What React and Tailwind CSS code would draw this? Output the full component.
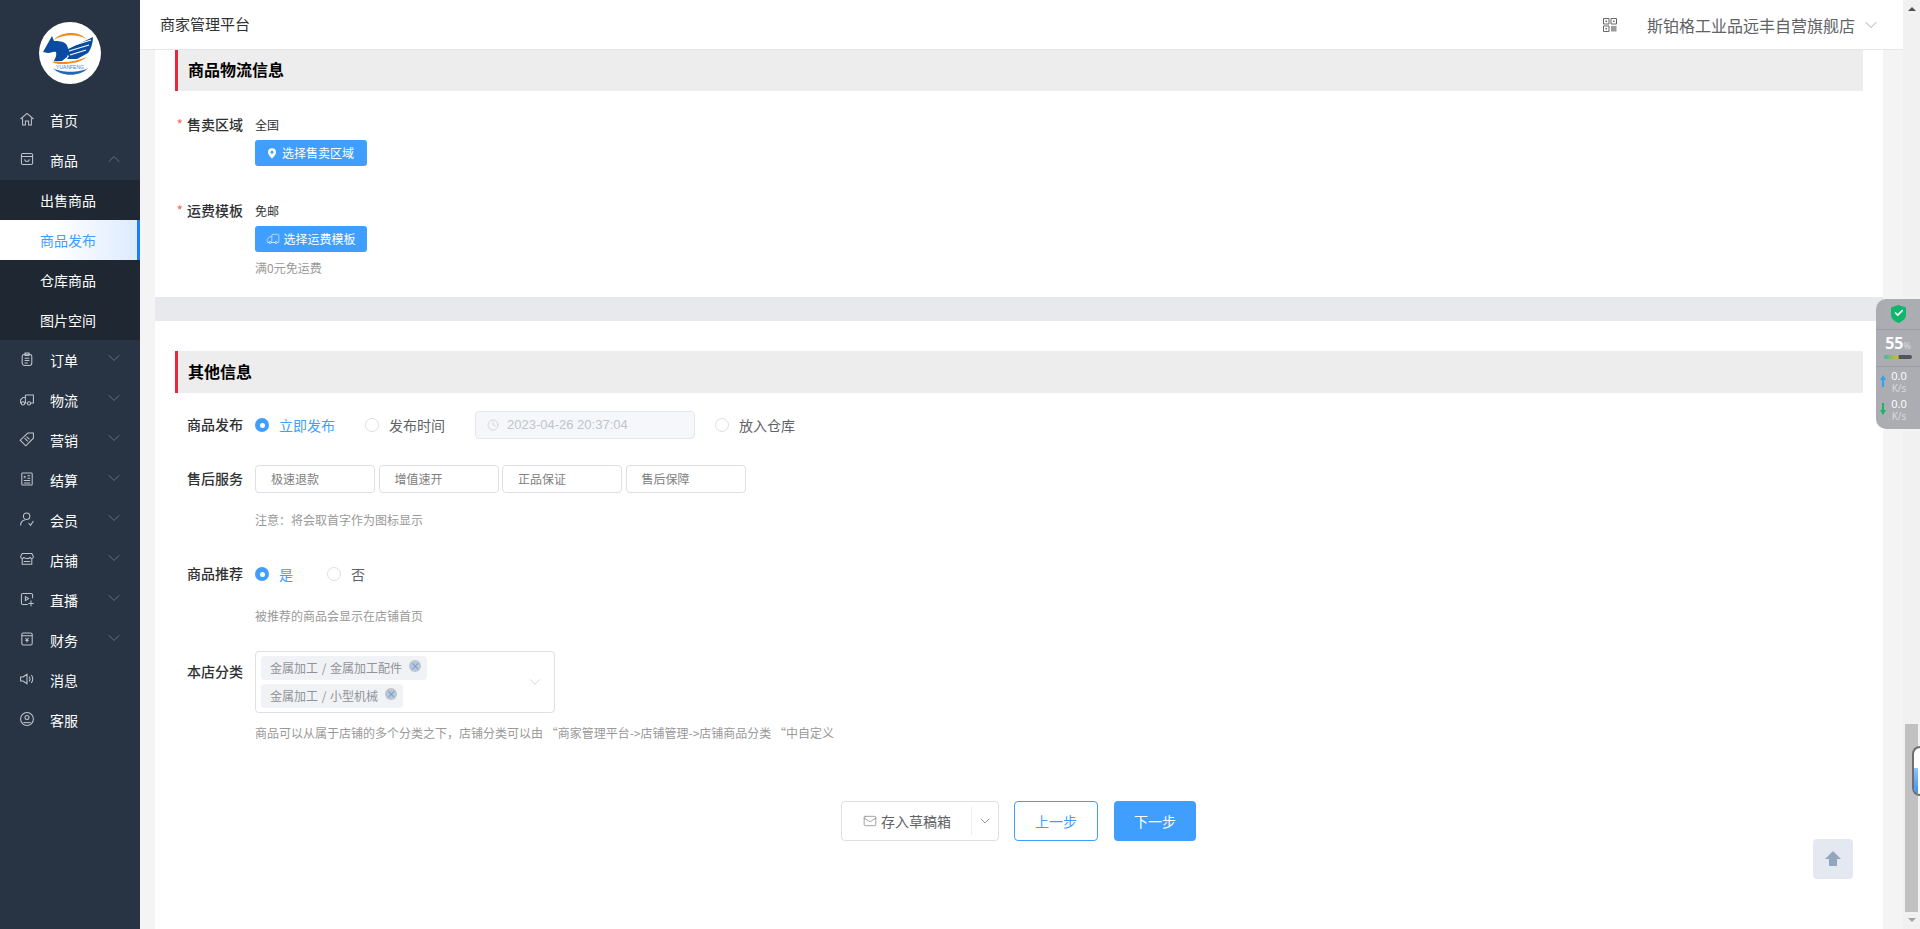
import { Clock, Truck, Mail, ChevronDown, ChevronUp, Check } from 'lucide-react'

const FONT = { fontFamily: '"Noto Sans CJK SC", "Liberation Sans", sans-serif' }

const ICONOS = {
  home: <><path d="M2 10 10 3l8 7" /><path d="M4.500 9v8.500h3.500v-5h4v5h3.500V9" /></>,
  caja: <><rect x="3" y="3" width="14" height="14" rx="2" /><path d="M3 7h14M7 10.500c.5 3.500 5.500 3.500 6 0" /></>,
  pedido: <><rect x="4" y="4" width="12" height="14" rx="3" /><path d="M7.500 2.500h5v3h-5zM7 9h6M7 12h6M7 15h4" /></>,
  camion: <><path d="M8 5h10v10h-3M8 5v10h1.500M8 8H5l-3 3v4h1" /><circle cx="5" cy="15.500" r="2" /><circle cx="12.500" cy="15.500" r="2" /></>,
  etiqueta: <><path d="m11 2.500 7 0 0 6.500-9.500 9.500-7-7z" /><path d="m7 9 4 4M9.500 7l3.500 3.500" /></>,
  factura: <><rect x="3.500" y="2.500" width="13" height="15" rx="1" /><path d="M6 6l2 1.500L6 9M10.500 6H14M10.500 9H14M6 12h8M6 15h8" /></>,
  usuario: <><circle cx="9.500" cy="6.500" r="4" /><path d="M2 18c0-4 3-6.500 6-7M12 15l2.500 3L18 12.500" /></>,
  tienda: <><path d="M4 3h12l2 4c0 3-4 3-4 .5 0 2.500-8 2.500-8 0C6 10 2 10 2 7z" /><path d="M4 10v6.500h12V10M6 13h8" /></>,
  directo: <><path d="M17 9V5a2 2 0 0 0-2-2H5a2 2 0 0 0-2 2v10a2 2 0 0 0 2 2h6" /><path d="m8 7 4 2.500L8 12zM15 12v7M11.500 15.500h7" /></>,
  finanzas: <><rect x="3.500" y="2.500" width="13" height="15" rx="2" /><path d="M3.500 6h13M8 9l2 2 2-2M10 11v3M8 12h4" /></>,
  altavoz: <><path d="M2 7.500h3L10 4v12l-5-3.500H2z" /><path d="M13 7c1 2 1 4 0 6M15.500 5c2 3 2 7 0 10" /></>,
  soporte: <><circle cx="10" cy="10" r="8" /><circle cx="10" cy="8" r="2.500" /><path d="M5.500 14.500h9" /></>,
}

const MENU_ARRIBA = [
  { nombre: '首页', icono: 'home' },
  { nombre: '商品', icono: 'caja', abierto: true },
]
const SUBMENU = ['出售商品', '商品发布', '仓库商品', '图片空间']
const MENU_ABAJO = [
  { nombre: '订单', icono: 'pedido', flecha: true },
  { nombre: '物流', icono: 'camion', flecha: true },
  { nombre: '营销', icono: 'etiqueta', flecha: true },
  { nombre: '结算', icono: 'factura', flecha: true },
  { nombre: '会员', icono: 'usuario', flecha: true },
  { nombre: '店铺', icono: 'tienda', flecha: true },
  { nombre: '直播', icono: 'directo', flecha: true },
  { nombre: '财务', icono: 'finanzas', flecha: true },
  { nombre: '消息', icono: 'altavoz' },
  { nombre: '客服', icono: 'soporte' },
]

function Logo() {
  return (
    <svg width="62" height="62" viewBox="0 0 62 62">
      <circle cx="31" cy="31" r="31" fill="#fff" />
      <path d="M15 18C22 9 40 9 47 17 39 12 24 12 15 18z" fill="#ee8b1e" />
      <path d="M4 30 13 14l2 5c4 0 9 0 12 3 3 4 3 9 1 13l-5 4-8 0c1-3 3-5 2-9-3-1-5 1-8 1-2 0-3-1-5-1z" fill="#0a4ba3" />
      <path d="M27 28 54 15c0 6-2 12-5 16l-11 6-10 0 2-3-3-2z" fill="#0a4ba3" />
      <path d="M29 25 52 18M30 29 50 23M31 33 47 28" stroke="#fff" strokeWidth="1.200" fill="none" />
      <path d="M13 40c4-1 8 0 11 0 8 0 16-2 24-5-6 5-16 7-24 7-4 0-7 0-11-2z" fill="#ee8b1e" />
      <path d="M14 46c7 9 28 9 35 0-8 5-27 5-35 0z" fill="#1f66c1" />
      <text x="31" y="47" textAnchor="middle" fontSize="5" fill="#3f7fd0" fontFamily="Liberation Sans, sans-serif">YUANFENG</text>
    </svg>
  )
}

function ItemMenu({ nombre, icono, flecha, abierto }) {
  return (
    <div className="flex h-10 items-center pl-[19px] text-sm text-white">
      <svg width="16" height="16" viewBox="0 0 20 20" fill="none" stroke="#bfc5cc" strokeWidth="1.300" className="mr-[15px] -translate-y-px">
        {ICONOS[icono]}
      </svg>
      <span className="w-[54px]">{nombre}</span>
      {flecha && <ChevronDown size={20} strokeWidth={0.9} className="-translate-y-[2px] text-[#7d8691]" />}
      {abierto && <ChevronUp size={20} strokeWidth={0.9} className="-translate-y-px text-[#7d8691]" />}
    </div>
  )
}

function Sidebar() {
  return (
    <aside className="flex w-[140px] shrink-0 flex-col bg-[#283443]">
      <div className="flex h-[100px] justify-center pt-[22px]">
        <Logo />
      </div>
      {MENU_ARRIBA.map((m) => <ItemMenu key={m.nombre} {...m} />)}
      <div className="bg-[#1e2732]">
        {SUBMENU.map((s) =>
          s === '商品发布' ? (
            <div key={s} className="flex h-10 items-center border-r-[3px] border-[#1a7ffb] bg-gradient-to-r from-white from-40% to-[#dcebff] pl-[40px] text-sm text-[#409eff]">{s}</div>
          ) : (
            <div key={s} className="flex h-10 items-center pl-[40px] text-sm text-white">{s}</div>
          ),
        )}
      </div>
      {MENU_ABAJO.map((m) => <ItemMenu key={m.nombre} {...m} />)}
    </aside>
  )
}

function Cabecera() {
  return (
    <header className="flex h-[50px] shrink-0 items-center border-b border-[#e6e6e6] bg-white pl-[20px] pr-[22px]">
      <span className="text-[15px] text-[#303133]">商家管理平台</span>
      <svg width="14" height="14" viewBox="0 0 14 14" className="ml-auto mr-[30px] text-[#666]" fill="none" stroke="currentColor">
        <path d="M.5.500h5.500v5.500H.5zM8 .5h5.500v5.500H8zM.5 8h5.500v5.500H.5z" />
        <path d="M2.500 2.500h1.500v1.500H2.500zM10 2.500h1.500v1.500H10zM2.500 10h1.500v1.500H2.500z" fill="currentColor" stroke="none" />
        <path d="M8 8h5.500v5.500H8z" fill="currentColor" stroke="none" opacity=".65" />
      </svg>
      <span className="text-base text-[#606266]">斯铂格工业品远丰自营旗舰店</span>
      <ChevronDown size={20} strokeWidth={0.9} className="ml-[6px] text-[#8c8c8c]" />
    </header>
  )
}

function Titulo({ children, alto = 'h-[42px] pb-[2px]' }) {
  return (
    <h2 className={`flex ${alto} items-center border-l-[3px] border-[#e8293c] bg-[#ededed] pl-[10px] text-base font-bold text-black`}>
      {children}
    </h2>
  )
}

function Etiqueta({ children, req, className = '' }) {
  return (
    <div className={`mr-[12px] w-[68px] shrink-0 -translate-y-px text-right text-sm font-medium leading-5 text-[#303133] ${className}`}>
      {req && <span className="mr-[4px] font-normal text-[#f56c6c]">*</span>}
      {children}
    </div>
  )
}

function Radio({ activo, children, className = '' }) {
  return (
    <span className={`flex items-center text-sm leading-5 ${activo ? 'text-[#409eff]' : 'text-[#606266]'} ${className}`}>
      {activo ? (
        <span className="mr-[10px] flex size-[14px] items-center justify-center rounded-full bg-[#409eff]">
          <span className="size-[5px] rounded-full bg-white" />
        </span>
      ) : (
        <span className="mr-[10px] size-[14px] rounded-full border border-[#dcdfe6] bg-white" />
      )}
      {children}
    </span>
  )
}

function BotonAzul({ icono, children }) {
  return (
    <div className="flex h-[26px] w-[112px] items-center justify-center rounded-[3px] bg-[#409eff] text-xs text-white">
      {icono}
      {children}
    </div>
  )
}

function Chip({ children }) {
  return (
    <div className="flex h-6 w-fit items-center rounded-[4px] bg-[#f0f2f5] pl-[9px] pr-[6px] text-xs text-[#909399] [word-spacing:1px]">
      {children}
      <span className="relative -top-[2px] ml-[7px] flex size-[12px] items-center justify-center rounded-full bg-[#c0c4cc] text-[10px] leading-none text-[#409eff]">×</span>
    </div>
  )
}

function Formulario() {
  return (
    <div className="h-full bg-white px-[20px]">
      <Titulo alto="h-[41px] pb-[3px]">商品物流信息</Titulo>

      <div className="mt-[24px] flex">
        <Etiqueta req>售卖区域</Etiqueta>
        <div>
          <p className="text-xs leading-5 text-[#303133]">全国</p>
          <div className="mt-[5px]">
            <BotonAzul
              icono={
                <svg width="8" height="11" viewBox="0 0 10 13" className="mr-[6px]">
                  <path d="M5 0a5 5 0 0 1 5 5c0 3-3 6-5 8-2-2-5-5-5-8a5 5 0 0 1 5-5z" fill="white" />
                  <circle cx="5" cy="5" r="1.800" fill="#409eff" />
                </svg>
              }
            >
              选择售卖区域
            </BotonAzul>
          </div>
        </div>
      </div>

      <div className="mt-[35px] flex">
        <Etiqueta req>运费模板</Etiqueta>
        <div>
          <p className="text-xs leading-5 text-[#303133]">免邮</p>
          <div className="mt-[5px]">
            <BotonAzul icono={<Truck size={14} strokeWidth={1} className="mr-[3px] -scale-x-100" />}>选择运费模板</BotonAzul>
          </div>
          <p className="mt-[6px] text-xs leading-5 text-[#999]">满0元免运费</p>
        </div>
      </div>

      <div className="-mx-[20px] mb-[30px] mt-[19px] h-[24px] bg-[#e8e9ed]" />

      <Titulo>其他信息</Titulo>

      <div className="mt-[18px] flex items-center">
        <Etiqueta>商品发布</Etiqueta>
        <Radio activo className="mr-[30px]">立即发布</Radio>
        <Radio className="mr-[30px]">发布时间</Radio>
        <div className="mr-[20px] flex h-[28px] w-[220px] items-center rounded-[4px] border border-[#e4e7ed] bg-[#f5f7fa] pl-[11px] text-[13px] text-[#c0c4cc]" style={{ fontFamily: '"Liberation Sans", sans-serif' }}>
          <Clock size={12} strokeWidth={1.300} className="mr-[8px]" />
          2023-04-26 20:37:04
        </div>
        <Radio>放入仓库</Radio>
      </div>

      <div className="mt-[26px] flex items-center">
        <Etiqueta>售后服务</Etiqueta>
        <div className="flex gap-[3.5px]">
          {['极速退款', '增值速开', '正品保证', '售后保障'].map((t) => (
            <div key={t} className="flex h-[28px] w-[120px] items-center rounded-[4px] border border-[#dcdfe6] pl-[15px] text-xs text-[#808080]">{t}</div>
          ))}
        </div>
      </div>
      <p className="ml-[80px] mt-[17px] text-xs leading-5 text-[#999]">注意：将会取首字作为图标显示</p>

      <div className="mt-[34px] flex items-center">
        <Etiqueta>商品推荐</Etiqueta>
        <Radio activo className="mr-[34px]">是</Radio>
        <Radio>否</Radio>
      </div>
      <p className="ml-[80px] mt-[22px] text-xs leading-5 text-[#999]">被推荐的商品会显示在店铺首页</p>

      <div className="mt-[25px] flex items-start">
        <Etiqueta className="mt-[11px]">本店分类</Etiqueta>
        <div className="flex h-[62px] w-[300px] items-center rounded-[4px] border border-[#dcdfe6] pl-[5px] pr-[10px]">
          <div className="flex flex-1 flex-col gap-[4px]">
            <Chip>金属加工 / 金属加工配件</Chip>
            <Chip>金属加工 / 小型机械</Chip>
          </div>
          <ChevronDown size={18} strokeWidth={0.9} className="text-[#c0c4cc]" />
        </div>
      </div>
      <p className="ml-[80px] mt-[10px] text-xs leading-5 text-[#999]">商品可以从属于店铺的多个分类之下，店铺分类可以由 “商家管理平台-&gt;店铺管理-&gt;店铺商品分类 “中自定义</p>

      <div className="mt-[58px] flex h-[40px] justify-center pr-[1px]">
        <div className="flex w-[158px] items-center rounded-[4px] border border-[#dcdfe6] text-sm text-[#606266]">
          <Mail size={14} strokeWidth={1} className="ml-[21px] mr-[4px]" />
          存入草稿箱
          <span className="ml-[20px] h-[28px] w-px bg-[#ebeef5]" />
          <ChevronDown size={16} strokeWidth={1} className="ml-[5px] text-[#606266]" />
        </div>
        <div className="ml-[15px] flex w-[84px] items-center justify-center rounded-[4px] border border-[#409eff] text-sm text-[#409eff]">上一步</div>
        <div className="ml-[16px] flex w-[82px] items-center justify-center rounded-[4px] bg-[#409eff] text-sm text-white">下一步</div>
      </div>
    </div>
  )
}

function BarraScroll() {
  return (
    <div className="flex w-[17px] shrink-0 flex-col items-center bg-[#f1f1f1]">
      <div className="mt-[7px] size-0 border-x-[4px] border-b-[4px] border-x-transparent border-b-[#505050]" />
      <div className="mt-[713px] h-[188px] w-[13px] bg-[#c1c1c1]" />
      <div className="mt-[6px] size-0 border-x-[4px] border-t-[4px] border-x-transparent border-t-[#a3a3a3]" />
    </div>
  )
}

function Velocidad({ subida }) {
  return (
    <div className="flex h-[28px] w-full items-center">
      <svg width="6" height="12" viewBox="0 0 6 12" className="ml-[4px]">
        {subida ? (
          <path d="M3 0 6 5H4v7H2V5H0z" fill="#2aa3f5" />
        ) : (
          <path d="M3 12 0 7h2V0h2v7h2z" fill="#12b76a" />
        )}
      </svg>
      <div className="flex flex-1 flex-col items-center pr-[8px] text-[11px] leading-[14px]">
        0.0
        <span className="text-[10px] leading-[11px] text-[#ddd]">K/s</span>
      </div>
    </div>
  )
}

function Medidor() {
  return (
    <div className="absolute right-0 top-[299px] flex h-[130px] w-[44px] flex-col items-center rounded-l-[10px] bg-[#a6a9ae]/95 text-white" style={{ fontFamily: '"Open Sans", sans-serif' }}>
      <svg width="15" height="18" viewBox="0 0 15 18" className="mt-[6px]">
        <path d="M7.500 0 15 2.500V10c0 4-4 6.500-7.500 8C4 16.500 0 14 0 10V2.500z" fill="#0fb76b" />
        <foreignObject x="2.500" y="3" width="10" height="10"><Check size={10} strokeWidth={4} color="white" /></foreignObject>
      </svg>
      <div className="mt-[6px] h-px w-full bg-[#9a9da2]" />
      <div className="mt-[4px] flex items-baseline text-[16px] font-bold leading-[19px]">55<span className="text-[9px] font-normal text-[#ddd]">%</span></div>
      <div className="h-[4px] w-[28px] rounded-full bg-gradient-to-r from-[#2fb5a0] from-0% via-[#c9b92c] via-50% to-[#51535e] to-55%" />
      <div className="mt-[7px] h-px w-full bg-[#9a9da2]" />
      <div className="flex w-full flex-col">
        <Velocidad subida />
        <Velocidad />
      </div>
    </div>
  )
}

export default function App() {
  return (
    <div className="relative flex h-[929px] w-[1920px] overflow-hidden" style={FONT}>
      <Sidebar />
      <div className="flex min-w-0 flex-1 flex-col">
        <Cabecera />
        <main className="min-h-0 flex-1 bg-[#f4f4f4] pl-[15px] pr-[20px]">
          <Formulario />
        </main>
      </div>
      <BarraScroll />

      <Medidor />

      {/* capsula encima de la barra */}
      <div className="absolute right-0 top-[746px] h-[50px] w-[8px] overflow-hidden rounded-l-full border-2 border-r-0 border-[#6f6f6f] bg-white">
        <div className="mt-[20px] h-[26px] w-[4px] bg-gradient-to-b from-[#8cc4ff] to-[#2f8fff]" />
      </div>

      <div className="absolute left-[1813px] top-[839px] flex size-10 items-center justify-center rounded-[4px] bg-[#e4e8f0]">
        <svg width="16" height="16" viewBox="0 0 16 16"><path d="M8 0 16 8h-4v7H4V8H0z" fill="#94a6bd" /></svg>
      </div>
    </div>
  )
}
